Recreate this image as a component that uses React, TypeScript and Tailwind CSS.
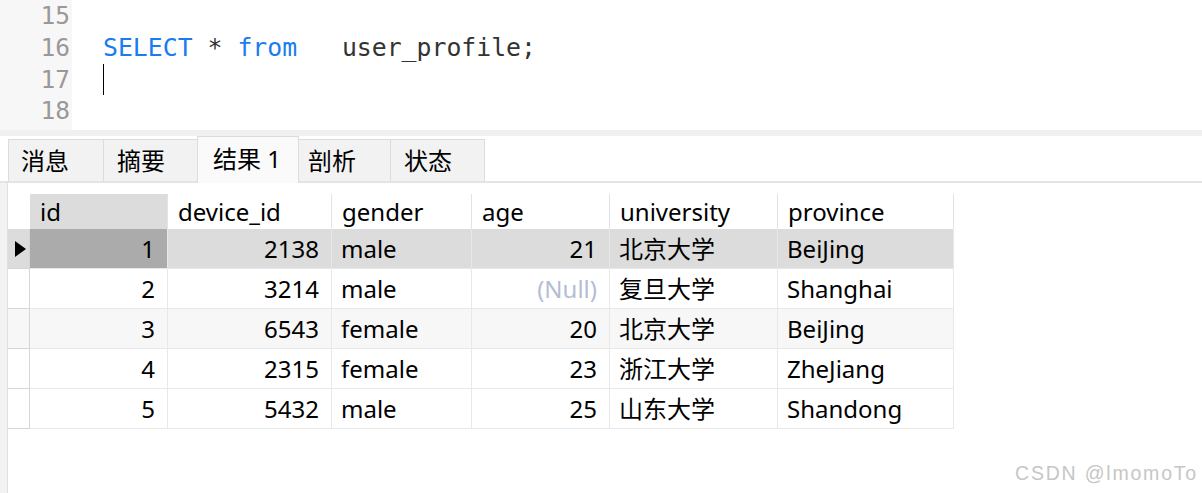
import React from 'react';

const mono = { fontFamily: '"DejaVu Sans Mono", "Liberation Mono", monospace' };
const sans = { fontFamily: '"Noto Sans", "Noto Sans CJK SC", sans-serif' };

const tabs = [
  { label: '消息', w: 'w-[96px]', pl: 'pl-[12px]' },
  { label: '摘要', w: 'w-[95px]', pl: 'pl-[13px]' },
  { label: '结果 1', w: 'w-[102px]', pl: 'pl-[15px]', active: true },
  { label: '剖析', w: 'w-[93px]', pl: 'pl-[9px]' },
  { label: '状态', w: 'w-[95px]', pl: 'pl-[13px]' },
];

const columns = [
  { name: 'id', w: 'w-[138px]', right: true },
  { name: 'device_id', w: 'w-[164px]', right: true },
  { name: 'gender', w: 'w-[140px]' },
  { name: 'age', w: 'w-[138px]', right: true },
  { name: 'university', w: 'w-[168px]' },
  { name: 'province', w: 'w-[176px]' },
];

const rows: (string | null)[][] = [
  ['1', '2138', 'male', '21', '北京大学', 'BeiJing'],
  ['2', '3214', 'male', null, '复旦大学', 'Shanghai'],
  ['3', '6543', 'female', '20', '北京大学', 'BeiJing'],
  ['4', '2315', 'female', '23', '浙江大学', 'ZheJiang'],
  ['5', '5432', 'male', '25', '山东大学', 'Shandong'],
];

function Editor() {
  return (
    <div className="flex h-[130px] overflow-hidden" style={mono}>
      <div className="w-[72px] bg-[#f7f7f7] text-right pr-[2px] text-[24.5px] leading-[31.8px] text-[#999]">
        <div>15</div>
        <div>16</div>
        <div>17</div>
        <div>18</div>
      </div>
      <div className="flex-1 bg-white pl-[31px] text-[24.8px] leading-[31.8px] whitespace-pre">
        <div>&nbsp;</div>
        <div>
          <span className="text-[#1a7cf0]">SELECT</span>
          <span className="text-[#333]"> * </span>
          <span className="text-[#1a7cf0]">from</span>
          <span className="text-[#333]">   user_profile;</span>
        </div>
        <div className="flex items-center h-[31.8px]">
          <div className="w-[1px] h-[31px] bg-black" />
        </div>
        <div>&nbsp;</div>
      </div>
    </div>
  );
}

function TabBar() {
  return (
    <div className="flex items-end h-[45px] pl-[8px] bg-white" style={sans}>
      {tabs.map((t) =>
        t.active ? (
          <div
            key={t.label}
            className={`${t.w} ${t.pl} h-[47px] -mb-[2px] -mr-[1px] pb-[3px] relative z-10 flex items-center bg-[#fafafa] border border-b-0 border-[#dcdcdc] text-[24px] text-black`}
          >
            {t.label}
          </div>
        ) : (
          <div
            key={t.label}
            className={`${t.w} ${t.pl} h-[42px] flex items-center bg-[#f2f2f2] border border-b-0 border-[#dcdcdc] -mr-[1px] text-[24px] text-black`}
          >
            {t.label}
          </div>
        )
      )}
    </div>
  );
}

function Grid() {
  return (
    <div className="pt-[11px] w-fit" style={sans}>
      <div className="flex h-[35px]">
        <div className="w-[22px] bg-white" />
        {columns.map((c, i) => (
          <div
            key={c.name}
            className={`${c.w} flex items-center pl-[10px] border-r border-[#e3e3e3] text-[24px] text-black ${i === 0 ? 'bg-[#dcdcdc]' : 'bg-white'}`}
          >
            {c.name}
          </div>
        ))}
      </div>
      {rows.map((r, ri) => {
        const bg = ri === 0 ? 'bg-[#dcdcdc]' : ri === 2 ? 'bg-[#f7f7f7]' : 'bg-white';
        return (
          <div key={ri} className={`flex h-[40px] ${bg}`}>
            <div className="w-[22px] flex items-center pl-[7px] border-r border-b border-[#d6d6d6]">
              {ri === 0 && (
                <svg width="11" height="16" viewBox="0 0 11 16">
                  <path d="M0 0 L11 8 L0 16 Z" fill="#000" />
                </svg>
              )}
            </div>
            {columns.map((c, ci) => {
              const v = r[ci];
              const cellBg = ri === 0 && ci === 0 ? 'bg-[#ababab]' : '';
              return (
                <div
                  key={c.name}
                  className={`${c.w} ${cellBg} flex items-center border-r border-b border-[#e8e8e8] text-[24px] ${c.right ? 'justify-end pr-[12px]' : 'pl-[9px]'}`}
                >
                  {v === null ? <span className="text-[#b3bdd4]">(Null)</span> : <span className="text-black">{v}</span>}
                </div>
              );
            })}
          </div>
        );
      })}
    </div>
  );
}

export default function App() {
  return (
    <div className="w-[1202px] h-[493px] bg-white overflow-hidden relative flex flex-col">
      <Editor />
      <div className="h-[6px] bg-[#f0f0f0]" />
      <TabBar />
      <div className="flex flex-1 border-t-2 border-[#e4e4e4]">
        <div className="w-[8px] bg-[#f2f2f2] border-r border-[#e0e0e0]" />
        <div className="flex-1 bg-white">
          <Grid />
        </div>
      </div>
      <div
        className="absolute left-[1015px] top-[459px] text-[19.5px] tracking-[1.8px] text-[#c6c6c6]"
        style={{ fontFamily: '"Liberation Sans", Arial, sans-serif' }}
      >
        CSDN @lmomoTo
      </div>
    </div>
  );
}
